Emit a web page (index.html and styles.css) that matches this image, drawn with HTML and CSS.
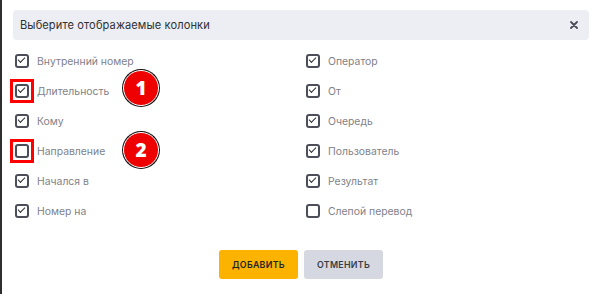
FILE: index.html
```html
<!DOCTYPE html>
<html lang="ru">
<head>
<meta charset="utf-8">
<link rel="stylesheet" href="styles.css">
</head>
<body>
<div class="dialog">
  <div class="header">
    <span class="title">Выберите отображаемые колонки</span>
    <svg class="close" width="8" height="8" viewBox="0 0 8 8"><path d="M1 1L7 7M7 1L1 7" stroke="#4a4d57" stroke-width="1.8" stroke-linecap="round"/></svg>
  </div>
  <div class="grid">
    <label class="item"><span class="cb on"></span><span class="lbl">Внутренний номер</span></label>
    <label class="item"><span class="cb on"></span><span class="lbl">Оператор</span></label>
    <label class="item"><span class="cb on mark"></span><span class="lbl">Длительность</span></label>
    <label class="item"><span class="cb on"></span><span class="lbl">От</span></label>
    <label class="item"><span class="cb on"></span><span class="lbl">Кому</span></label>
    <label class="item"><span class="cb on"></span><span class="lbl">Очередь</span></label>
    <label class="item"><span class="cb mark"></span><span class="lbl">Направление</span></label>
    <label class="item"><span class="cb on"></span><span class="lbl">Пользователь</span></label>
    <label class="item"><span class="cb on"></span><span class="lbl">Начался в</span></label>
    <label class="item"><span class="cb on"></span><span class="lbl">Результат</span></label>
    <label class="item"><span class="cb on"></span><span class="lbl">Номер на</span></label>
    <label class="item"><span class="cb"></span><span class="lbl">Слепой перевод</span></label>
  </div>
  <div class="actions">
    <button class="btn primary">ДОБАВИТЬ</button>
    <button class="btn secondary">ОТМЕНИТЬ</button>
  </div>
  <div class="badge b1">1</div>
  <div class="badge b2">2</div>
</div>
</body>
</html>
```
FILE: styles.css
```css
html, body {
  margin: 0;
  padding: 0;
  background: #fff;
}
body {
  width: 599px;
  height: 294px;
  overflow: hidden;
  font-family: Inter, "Open Sans", sans-serif;
}
.dialog {
  position: relative;
  box-sizing: border-box;
  height: 294px;
  border-left: 2px solid #2e2e2e;
  padding: 10px 10px 0 11px;
}
.header {
  height: 30px;
  background: #eceef3;
  border-radius: 4px;
  display: flex;
  align-items: center;
  justify-content: space-between;
  padding: 0 11px 0 7px;
}
.title {
  font-size: 11.1px;
  color: #2f3136;
  letter-spacing: 0.1px;
}
.close {
  display: block;
}
.grid {
  display: grid;
  grid-template-columns: 291px 1fr;
  grid-auto-rows: 30px;
  margin-top: 6px;
  padding-left: 2px;
}
.item {
  display: flex;
  align-items: center;
  gap: 8px;
}
.cb {
  box-sizing: border-box;
  width: 14px;
  height: 14px;
  border: 2px solid #4b4e58;
  border-radius: 3px;
  position: relative;
  flex: none;
}
.cb.on::after {
  content: "";
  position: absolute;
  left: 1px;
  top: 1px;
  width: 6px;
  height: 3px;
  border-left: 1.9px solid #2c2e35;
  border-bottom: 1.9px solid #2c2e35;
  transform: rotate(-45deg);
}
.cb.mark::before {
  content: "";
  position: absolute;
  left: -7px;
  top: -7px;
  right: -7px;
  bottom: -7px;
  border: 3px solid #ff0000;
}
.lbl {
  font-size: 10.4px;
  color: #7f8189;
}
.actions {
  display: flex;
  justify-content: center;
  gap: 6px;
  margin-top: 24px;
}
.btn {
  width: 79px;
  height: 29px;
  border: none;
  border-radius: 3px;
  font-family: Inter, "Open Sans", sans-serif;
  font-size: 8.8px;
  font-weight: 600;
  letter-spacing: 0.3px;
  color: #23252b;
  padding: 0;
}
.primary { background: #fcb300; }
.secondary { background: #d5d8e1; color: #3a3d45; }
.badge {
  position: absolute;
  left: 121px;
  width: 34px;
  height: 34px;
  border-radius: 50%;
  background: #ee0000;
  border: 1.5px solid #fff;
  box-shadow: 0 0 0 1px #111;
  color: #fff;
  font-family: "Open Sans", sans-serif;
  font-weight: 800;
  font-size: 19px;
  display: flex;
  align-items: center;
  justify-content: center;
}
.b1 { top: 70px; }
.b2 { top: 132px; }
```
